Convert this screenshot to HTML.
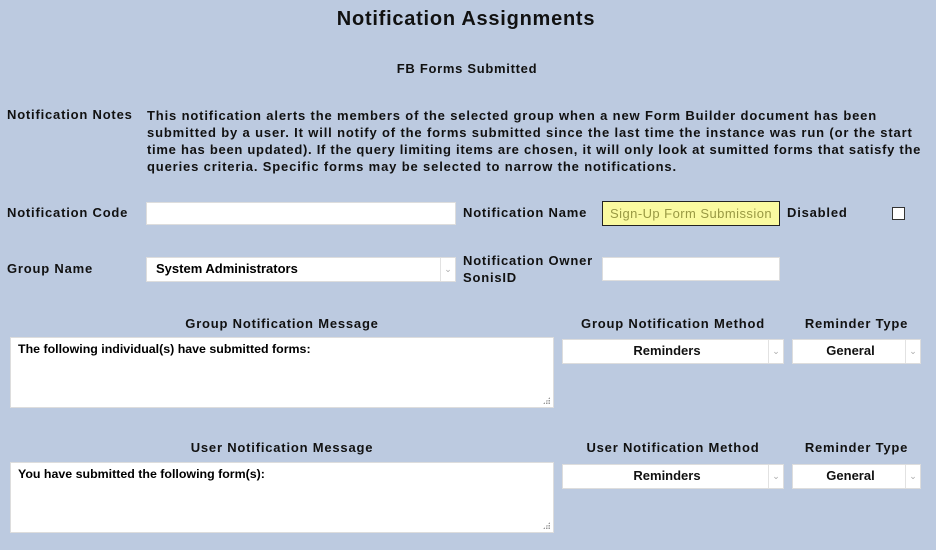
<!DOCTYPE html>
<html><head><meta charset="utf-8"><style>
body{margin:0;width:936px;height:550px;background:#bccae0;font-family:"Liberation Sans",Arial,sans-serif;font-size:13px;letter-spacing:0.8px;font-weight:bold;color:#111;position:relative;overflow:hidden}
.a{position:absolute;white-space:nowrap}
.c{position:absolute;text-align:center;white-space:nowrap}
.box{position:absolute;background:#fff;border:1px solid #ddd;box-sizing:border-box}
.sel{position:absolute;background:#fff;border:1px solid #ddd;box-sizing:border-box;line-height:22px;letter-spacing:0}
.sel .ar{position:absolute;right:0;top:0;bottom:0;width:14px;border-left:1px solid #e2e2e2;color:#aaa;font-size:9px;text-align:center;font-weight:normal;letter-spacing:0}
.ta{font-size:12.4px;letter-spacing:0;color:#000}
.grip{position:absolute;right:3px;bottom:3px;width:7px;height:7px;background:radial-gradient(circle,#999 0.8px,transparent 1px) 0 0/2.5px 2.5px;clip-path:polygon(100% 0,100% 100%,0 100%)}
</style></head><body>
<div class="c" style="left:0;width:932px;top:8px;font-size:20px;letter-spacing:0.75px">Notification Assignments</div>
<div class="c" style="left:0;width:934px;top:61px;letter-spacing:0.7px">FB Forms Submitted</div>
<div class="a" style="left:7px;top:107px">Notification Notes</div>
<div class="a" style="left:147px;top:107px;line-height:17px;letter-spacing:0.85px">This notification alerts the members of the selected group when a new Form Builder document has been<br>submitted by a user. It will notify of the forms submitted since the last time the instance was run (or the start<br><span style="letter-spacing:0.72px">time has been updated). If the query limiting items are chosen, it will only look at sumitted forms that satisfy the</span><br>queries criteria. Specific forms may be selected to narrow the notifications.</div>

<div class="a" style="left:7px;top:205px">Notification Code</div>
<div class="box" style="left:146px;top:202px;width:310px;height:23px"></div>
<div class="a" style="left:463px;top:205px">Notification Name</div>
<div class="box" style="left:602px;top:201px;width:178px;height:25px;background:#fafaa0;border:1px solid #222;color:#999944;line-height:23px;padding-left:7px;font-weight:normal;letter-spacing:0.45px">Sign-Up Form Submission</div>
<div class="a" style="left:787px;top:205px">Disabled</div>
<div class="box" style="left:892px;top:207px;width:13px;height:13px;border:1px solid #333"></div>

<div class="a" style="left:7px;top:261px">Group Name</div>
<div class="sel" style="left:146px;top:257px;width:310px;height:25px;padding-left:9px;color:#000">System Administrators<span class="ar">&#8964;</span></div>
<div class="a" style="left:463px;top:252px;line-height:17px">Notification Owner<br>SonisID</div>
<div class="box" style="left:602px;top:257px;width:178px;height:24px"></div>

<div class="c" style="left:10px;width:544px;top:316px">Group Notification Message</div>
<div class="box ta" style="left:10px;top:337px;width:544px;height:71px;padding:4px 7px">The following individual(s) have submitted forms:<div class="grip"></div></div>
<div class="c" style="left:562px;width:222px;top:316px">Group Notification Method</div>
<div class="sel c" style="left:562px;top:339px;width:222px;height:25px;padding-right:12px">Reminders<span class="ar">&#8964;</span></div>
<div class="c" style="left:792px;width:129px;top:316px">Reminder Type</div>
<div class="sel c" style="left:792px;top:339px;width:129px;height:25px;padding-right:12px">General<span class="ar">&#8964;</span></div>

<div class="c" style="left:10px;width:544px;top:440px">User Notification Message</div>
<div class="box ta" style="left:10px;top:462px;width:544px;height:71px;padding:4px 7px">You have submitted the following form(s):<div class="grip"></div></div>
<div class="c" style="left:562px;width:222px;top:440px">User Notification Method</div>
<div class="sel c" style="left:562px;top:464px;width:222px;height:25px;padding-right:12px">Reminders<span class="ar">&#8964;</span></div>
<div class="c" style="left:792px;width:129px;top:440px">Reminder Type</div>
<div class="sel c" style="left:792px;top:464px;width:129px;height:25px;padding-right:12px">General<span class="ar">&#8964;</span></div>
</body></html>
